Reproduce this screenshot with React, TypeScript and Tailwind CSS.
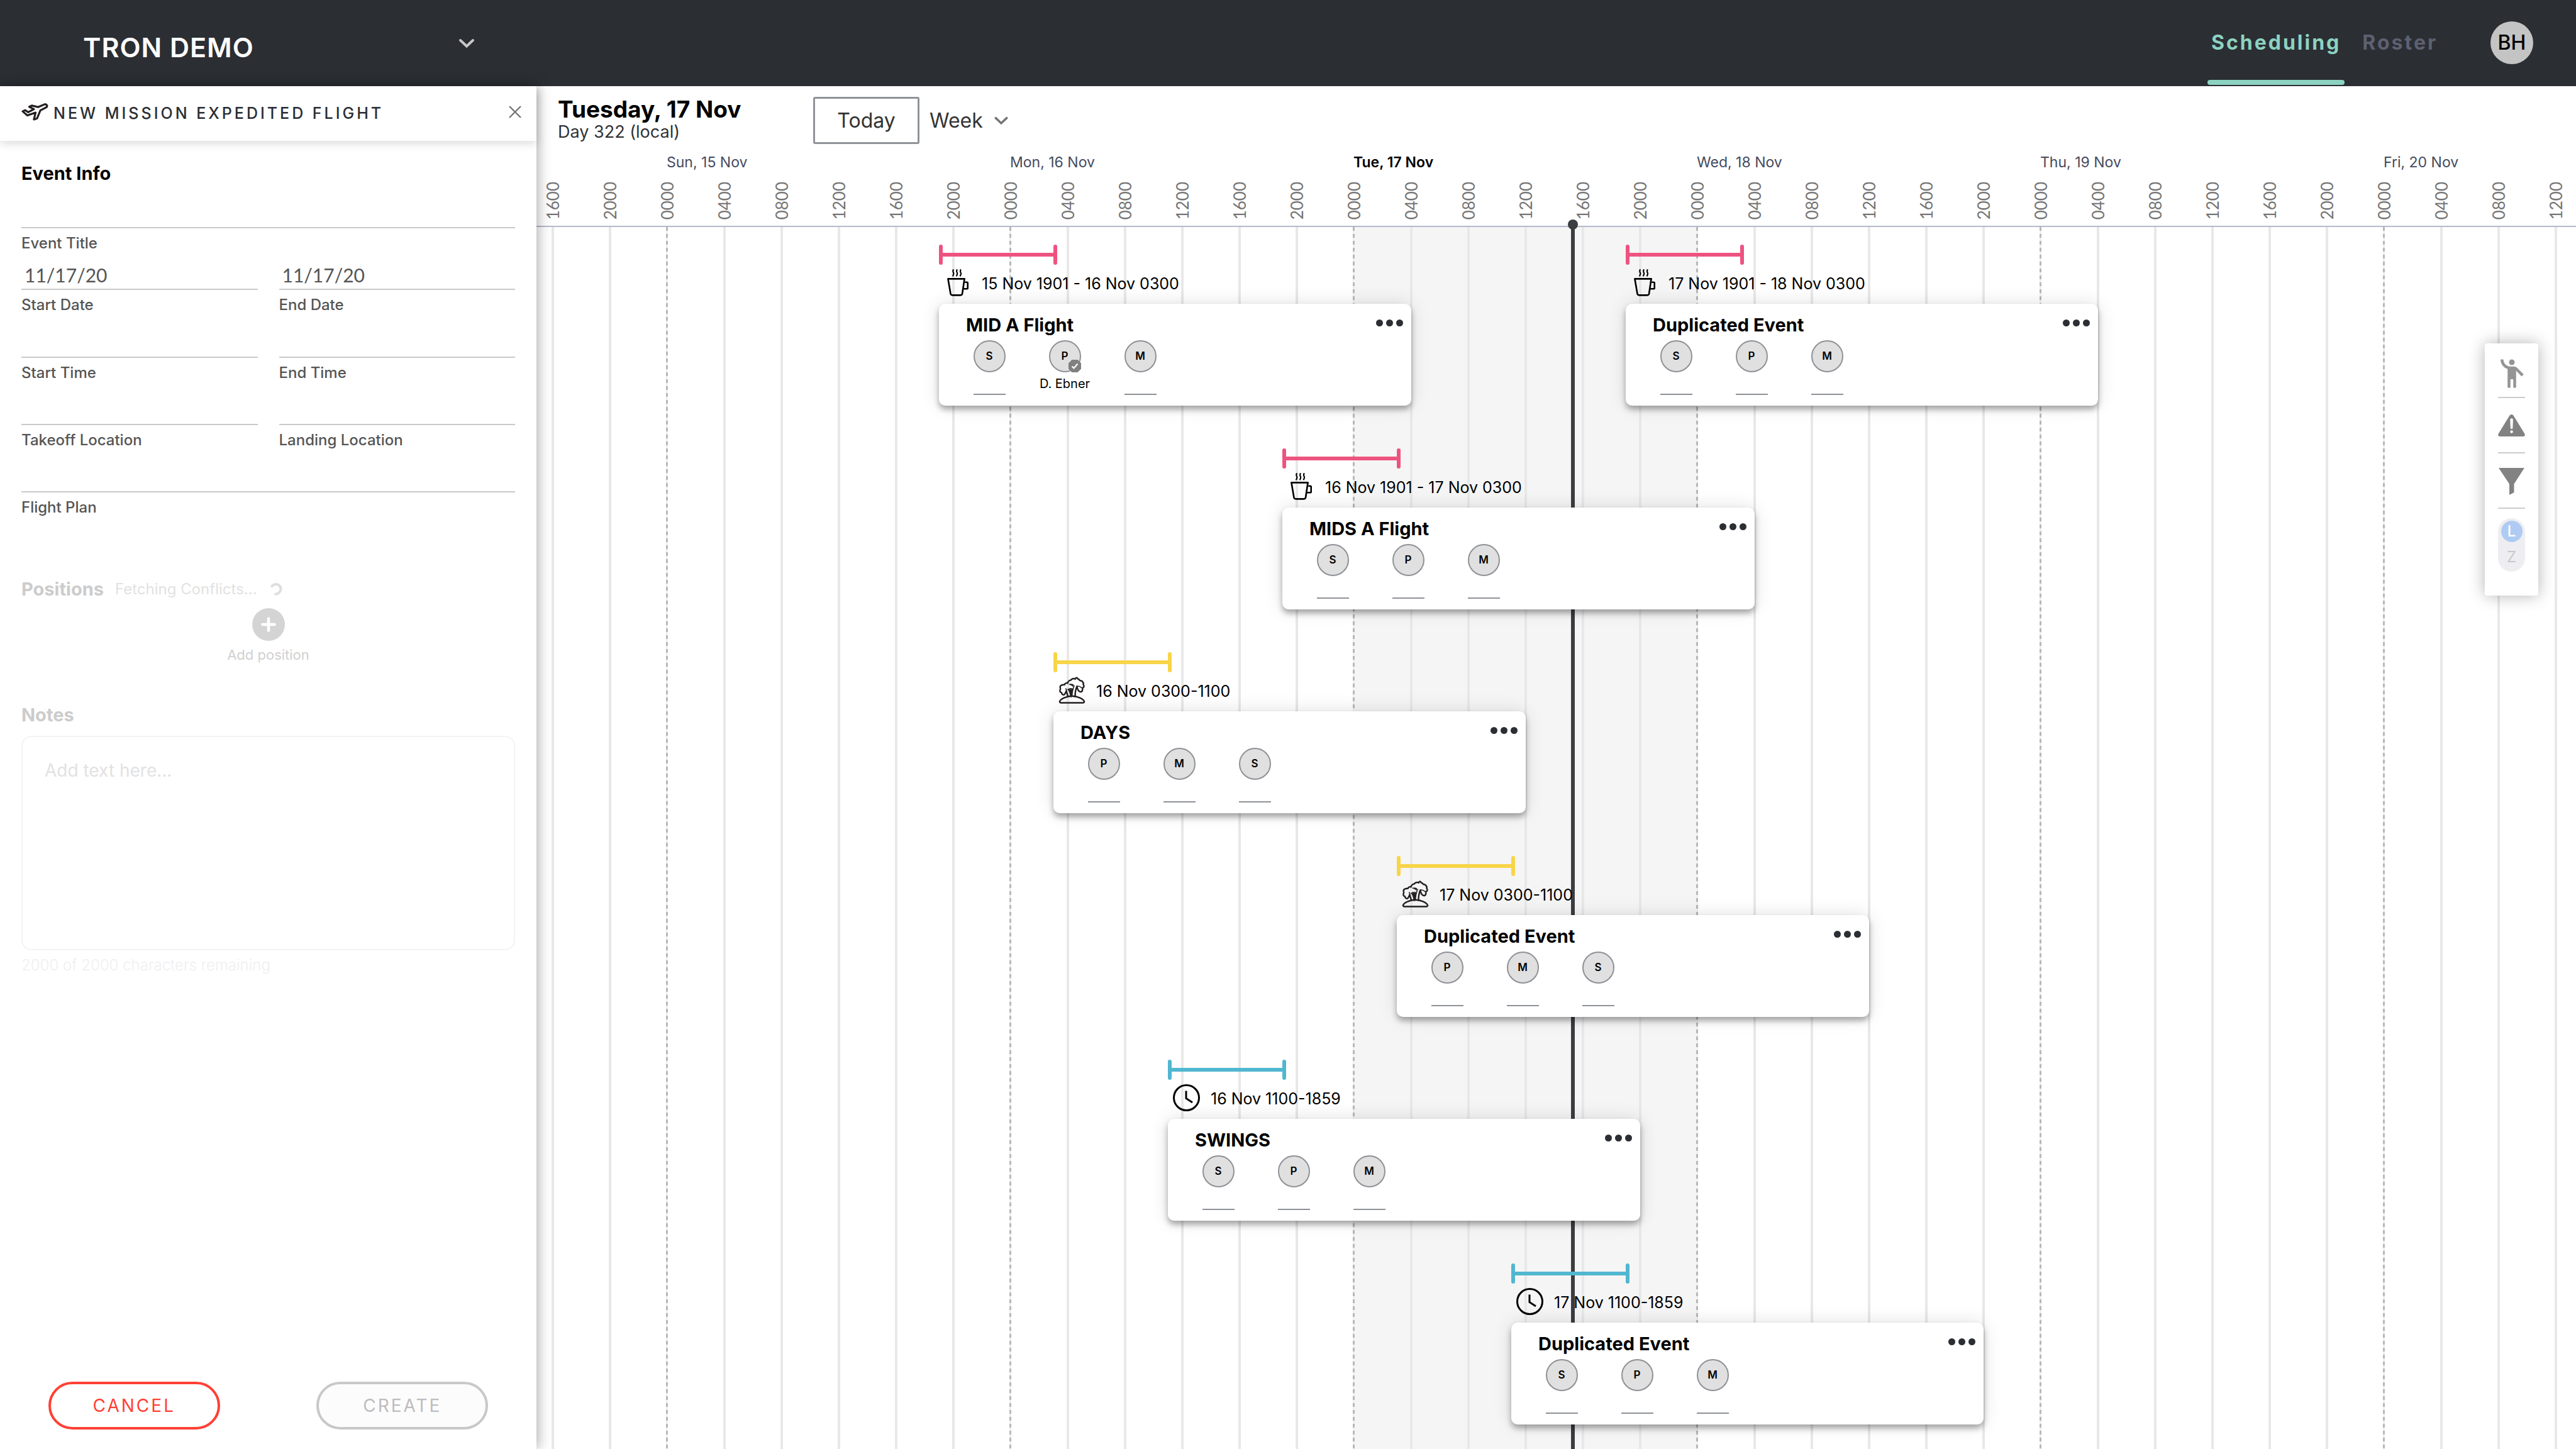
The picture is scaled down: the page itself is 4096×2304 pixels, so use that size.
import React from "react";

const HOUR_WIDTH = 22.75;
const HOURS = ["1600", "2000", "0000", "0400", "0800", "1200"];
const COLUMNS = Array.from({ length: 36 }, (_, i) => i);
const DAYS = ["Sun, 15 Nov", "Mon, 16 Nov", "Tue, 17 Nov", "Wed, 18 Nov", "Thu, 19 Nov", "Fri, 20 Nov"];
const TODAY = "Tue, 17 Nov";

type Shift = "mid" | "day" | "swing";
type Slot = { role: string; name?: string };
type FlightEvent = { title: string; time: string; shift: Shift; start: number; slots: Slot[] };

const slots = (roles: string): Slot[] => roles.split("").map((role) => ({ role }));

/* start: hours after Sunday 15 Nov 0000 */
const LANES: FlightEvent[][] = [
  [
    {
      title: "MID A Flight",
      time: "15 Nov 1901 - 16 Nov 0300",
      shift: "mid",
      start: 19,
      slots: [{ role: "S" }, { role: "P", name: "D. Ebner" }, { role: "M" }],
    },
    { title: "Duplicated Event", time: "17 Nov 1901 - 18 Nov 0300", shift: "mid", start: 67, slots: slots("SPM") },
  ],
  [{ title: "MIDS A Flight", time: "16 Nov 1901 - 17 Nov 0300", shift: "mid", start: 43, slots: slots("SPM") }],
  [{ title: "DAYS", time: "16 Nov 0300-1100", shift: "day", start: 27, slots: slots("PMS") }],
  [{ title: "Duplicated Event", time: "17 Nov 0300-1100", shift: "day", start: 51, slots: slots("PMS") }],
  [{ title: "SWINGS", time: "16 Nov 1100-1859", shift: "swing", start: 35, slots: slots("SPM") }],
  [{ title: "Duplicated Event", time: "17 Nov 1100-1859", shift: "swing", start: 59, slots: slots("SPM") }],
];

const SHIFT_COLOR: Record<Shift, string> = {
  mid: "bg-[#ee5380]",
  day: "bg-[#f8d548]",
  swing: "bg-[#50b7d0]",
};

function Chevron({ className }: { className: string }) {
  return (
    <svg viewBox="0 0 25 16" className={className} fill="none" stroke="currentColor" strokeWidth="4" strokeLinecap="round" aria-hidden="true">
      <path d="M2.5 3 12.5 12.5 22.5 3" />
    </svg>
  );
}

function PlaneIcon() {
  return (
    <svg viewBox="40 46 244 160" className="h-7 w-[43px]" fill="none" stroke="#231f20" strokeWidth="18" strokeLinejoin="round" aria-hidden="true">
      <path d="M51 121 74 110 101 128 153 101 111 79 134 68 191 82 247 58C264 52 280 66 268 83L211 113 182 184 153 194 168 132 94 158Z" />
    </svg>
  );
}

function MugIcon() {
  return (
    <svg viewBox="72 60 192 240" className="h-[43px] w-[34px]" fill="none" stroke="#000" strokeWidth="15" strokeLinejoin="round" aria-hidden="true">
      <path d="M80 145H228L208 279Q205 292 192 292H120Q106 292 103 279Z" />
      <path d="M232 176H249Q257 176 257 184V227Q257 235 249 235H220" />
      <path strokeWidth="12" d="M130 60C118 76 126 84 130 94C133 106 126 112 122 123M163 60C151 76 159 84 163 94C166 106 159 112 155 123M196 60C184 76 192 84 196 94C199 106 192 112 188 123" />
    </svg>
  );
}

function PalmIcon() {
  return (
    <svg viewBox="78 76 238 244" className="h-[43px] w-[43px]" fill="none" stroke="#231f20" strokeWidth="14" strokeLinejoin="round" strokeLinecap="round" aria-hidden="true">
      <path d="M86 300C92 276 150 251 197 251C245 251 302 276 308 300Q306 311 296 311H98Q88 311 86 300Z" />
      <path d="M225 256C225 225 230 190 242 163C246 190 258 213 279 213C294 207 294 190 292 176C306 174 309 160 300 148C302 124 287 112 268 110C260 96 250 96 246 92C242 82 230 82 227 97C212 90 194 94 189 106C172 108 160 122 158 134C146 130 132 138 130 148C106 146 86 158 91 176C97 182 91 190 89 198C86 212 94 220 104 220C104 236 120 246 131 234C138 224 142 214 146 206L161 256" />
      <path strokeWidth="5" fill="#231f20" d="M200 158 206 166 212 150C204 142 186 142 172 144Z" />
      <path strokeWidth="5" fill="#231f20" d="M181 256C180 225 172 207 161 194L200 190 220 154C208 186 200 220 199 256Z" />
      <path strokeWidth="9" d="M242 163C256 158 270 164 284 176M146 206C148 196 146 190 142 184M160 192C170 184 182 182 196 184" />
    </svg>
  );
}

function ClockIcon() {
  return (
    <svg viewBox="0 0 43 43" className="h-[43px] w-[43px]" fill="none" stroke="#000" strokeWidth="3" aria-hidden="true">
      <circle cx="21.5" cy="21.5" r="20" />
      <path d="M21 10.5V22.5L31 29" />
    </svg>
  );
}

function ShiftIcon({ shift }: { shift: Shift }) {
  if (shift === "mid") return <MugIcon />;
  if (shift === "day") return <PalmIcon />;
  return <ClockIcon />;
}

function Field({ id, label, value, className }: { id: string; label: string; value?: string; className: string }) {
  return (
    <div className="flex flex-col">
      <input
        id={id}
        type="text"
        defaultValue={value}
        className={`${className} w-full rounded-none border-b-2 border-[#c9c9c9] bg-transparent px-[5px] pt-3 font-['Lato',sans-serif] text-[30px] leading-8 text-[#555] outline-none`}
      />
      <label htmlFor={id} className="mt-2 text-[24px] leading-8 font-medium text-[#555]">
        {label}
      </label>
    </div>
  );
}

function TopBar() {
  return (
    <header className="flex h-[137px] shrink-0 items-stretch justify-between bg-[#2b2e33] pr-[68px] pl-[132px]">
      <div className="relative flex w-[623px] items-center pt-3">
        <select aria-label="Organization" className="w-full appearance-none bg-transparent text-[43px] leading-[52px] font-semibold tracking-[1px] text-white outline-none">
          <option>TRON DEMO</option>
        </select>
        <Chevron className="pointer-events-none absolute top-[61px] right-0 h-4 w-[26px] text-[#c8c8c8]" />
      </div>
      <div className="flex">
        <nav className="flex gap-4 text-[32px] leading-10 font-bold tracking-[3px]">
          <a href="#scheduling" className="flex flex-col items-center justify-between pt-[48px] pb-0.5 text-[#8cd3c1]">
            <span className="px-1.5">Scheduling</span>
            <span className="h-2 w-full rounded bg-[#8cd3c1]" />
          </a>
          <a href="#roster" className="px-3 pt-[48px] text-[#5d6070]">
            Roster
          </a>
        </nav>
        <button type="button" className="mt-[34px] ml-[72px] h-[68px] w-[68px] rounded-full bg-[#c4c4c4] text-[32px] font-medium text-black">
          BH
        </button>
      </div>
    </header>
  );
}

function MissionPanel() {
  return (
    <form className="relative z-20 flex w-[853px] shrink-0 flex-col bg-white shadow-[2px_0_20px_rgba(0,0,0,0.35)]">
      <div className="flex h-[87px] items-center pr-6 pb-1.5 pl-[34px] shadow-[0_4px_14px_rgba(0,0,0,0.15)]">
        <PlaneIcon />
        <h2 className="ml-2 pt-1 text-[25px] leading-8 font-medium tracking-[4px] text-[#2b2e33]">NEW MISSION EXPEDITED FLIGHT</h2>
        <button type="button" aria-label="Close" className="ml-auto text-[#757575]">
          <svg viewBox="0 0 20 20" className="h-5 w-5" fill="none" stroke="currentColor" strokeWidth="2.4" aria-hidden="true">
            <path d="M1 1 19 19M19 1 1 19" />
          </svg>
        </button>
      </div>

      <div className="flex flex-col px-[34px] pt-8">
        <h3 className="text-[29px] leading-10 font-bold text-black">Event Info</h3>
        <Field id="event-title" label="Event Title" className="h-[67px]" />
        <div className="grid grid-cols-2 gap-x-[34px]">
          <Field id="start-date" label="Start Date" value="11/17/20" className="h-[58px]" />
          <Field id="end-date" label="End Date" value="11/17/20" className="h-[58px]" />
          <Field id="start-time" label="Start Time" className="h-[68px]" />
          <Field id="end-time" label="End Time" className="h-[68px]" />
          <Field id="takeoff" label="Takeoff Location" className="h-[67px]" />
          <Field id="landing" label="Landing Location" className="h-[67px]" />
        </div>
        <Field id="flight-plan" label="Flight Plan" className="h-[67px]" />

        <div className="mt-[94px] flex items-center">
          <h3 className="text-[29px] leading-10 font-bold text-[#ccc]">Positions</h3>
          <p className="ml-[18px] text-[24px] leading-10 text-[#e2e2e2]">Fetching Conflicts...</p>
          <svg viewBox="0 0 20 20" className="ml-5 h-5 w-5" fill="none" stroke="#dedede" strokeWidth="4" aria-hidden="true">
            <path d="M2.5 6.5C5 1.5 11 1 14.500 3.500C19.500 7.500 18.500 17 7.500 18" />
          </svg>
        </div>
        <button type="button" className="mt-2.5 flex flex-col items-center self-center text-[22px] leading-7 text-[#d0d0d0]">
          <svg viewBox="0 0 52 52" className="h-[52px] w-[52px]" aria-hidden="true">
            <circle cx="26" cy="26" r="26" fill="#d4d4d4" />
            <path d="M26 16.500V35.500M16.500 26H35.500" stroke="#fff" strokeWidth="4.600" strokeLinecap="round" />
          </svg>
          <span className="mt-2">Add position</span>
        </button>

        <label htmlFor="notes" className="mt-[62px] text-[29px] leading-10 font-bold text-[#ccc]">
          Notes
        </label>
        <textarea
          id="notes"
          placeholder="Add text here..."
          className="mt-[13px] h-[341px] resize-none rounded-2xl border-2 border-[#f3f3f3] bg-transparent px-[35px] py-[33px] text-[28px] leading-10 outline-none placeholder:text-[#e2e2e2]"
        />
        <p className="mt-2 text-[24px] leading-8 font-light text-[#efefef]">2000 of 2000 characters remaining</p>
      </div>

      <div className="mt-auto mb-[31px] flex justify-around text-[28px] leading-9 tracking-[3px]">
        <button type="button" className="h-[76px] w-[273px] rounded-full border-4 border-[#ff4034] bg-white text-[#ff4034]">
          CANCEL
        </button>
        <button type="button" disabled className="h-[76px] w-[273px] rounded-full border-4 border-[#c8c8c8] bg-[#fcfcfc] text-[#bdbdbd]">
          CREATE
        </button>
      </div>
    </form>
  );
}

function TimelineHeader() {
  return (
    <div className="shrink-0 overflow-hidden border-b-2 border-[#b6b9ca]">
      <div className="flex h-[92px] items-start pt-[17px] pl-[34px]">
        <div className="w-[406px]">
          <h1 className="text-[37px] leading-10 font-bold text-black">Tuesday, 17 Nov</h1>
          <p className="text-[27px] leading-8 text-[#333]">Day 322 (local)</p>
        </div>
        <button type="button" className="h-[75px] w-[169px] rounded-[3px] border-[3px] border-[#8f9398] bg-white text-[32px] leading-10 text-[#333]">
          Today
        </button>
        <div className="ml-4 flex h-[75px] items-center">
          <select aria-label="Range" className="appearance-none bg-transparent text-[32px] leading-10 text-[#333] outline-none">
            <option>Week</option>
          </select>
          <Chevron className="pointer-events-none ml-[18px] h-3.5 w-[22px] text-[#757575]" />
        </div>
      </div>
      <div className="mt-[15px] flex pl-[207px] text-[23px] leading-7">
        {DAYS.map((day) => (
          <div key={day} className={day === TODAY ? "w-[546px] shrink-0 font-semibold text-black" : "w-[546px] shrink-0 text-[#454a5e]"}>
            {day}
          </div>
        ))}
      </div>
      <div className="-ml-5 flex h-[87px] pt-2 font-['Lato',sans-serif] text-[26px] leading-8 text-[#757575]">
        {COLUMNS.map((i) => (
          <div key={i} className="flex w-[91px] shrink-0 items-center justify-center">
            <span className="rotate-180 [writing-mode:vertical-rl]">{HOURS[i % 6]}</span>
          </div>
        ))}
      </div>
    </div>
  );
}

function GridLines() {
  return (
    <div className="absolute inset-0 flex overflow-hidden pl-6" aria-hidden="true">
      {COLUMNS.map((i) => (
        <div key={i} className={i >= 14 && i < 20 ? "w-[91px] shrink-0 bg-[#f5f5f5]" : "w-[91px] shrink-0"}>
          <div
            className={
              i % 6 === 2
                ? "h-full w-[3px] bg-[repeating-linear-gradient(to_bottom,#b8b8b8_0px,#b8b8b8_6px,#f0f0f0_6px,#f0f0f0_11px)]"
                : "h-full w-1 bg-[#e8e8e8]"
            }
          />
        </div>
      ))}
    </div>
  );
}

function Position({ slot }: { slot: Slot }) {
  return (
    <div className="flex w-[120px] flex-col items-center">
      <div className="relative flex h-[51px] w-[51px] items-center justify-center rounded-full border-2 border-[#8e9196] bg-[#e0e0e0] text-[17px] font-semibold text-black">
        {slot.role}
        {slot.name && (
          <svg viewBox="0 0 20 20" className="absolute -right-0.5 -bottom-0.5 h-5 w-5" aria-hidden="true">
            <path d="M6 0H14L20 6V14L14 20H6L0 14V6Z" fill="#808080" stroke="#808080" strokeLinejoin="round" />
            <path d="M5.500 10.500 8.500 13.500 14.500 6.500" fill="none" stroke="#fff" strokeWidth="2.200" />
          </svg>
        )}
      </div>
      {slot.name ? (
        <span className="mt-1 text-[20px] leading-7 text-black">{slot.name}</span>
      ) : (
        <span className="mt-1 h-8 w-[51px] border-b-2 border-[#8e9196]" />
      )}
    </div>
  );
}

function EventItem({ event }: { event: FlightEvent }) {
  const color = SHIFT_COLOR[event.shift];
  return (
    <article className="col-start-1 row-start-1 w-[751px]" style={{ marginLeft: Math.floor(event.start * HOUR_WIDTH) }}>
      <div className="flex h-8 w-[188px] items-center">
        <div className={`h-full w-1.5 rounded-[3px] ${color}`} />
        <div className={`h-1.5 flex-1 ${color}`} />
        <div className={`h-full w-1.5 rounded-[3px] ${color}`} />
      </div>
      <div className="mt-[7px] flex h-[43px] items-center pl-2">
        <div className="flex w-[43px] justify-center">
          <ShiftIcon shift={event.shift} />
        </div>
        <span className="ml-[17px] pt-0.5 text-[25px] leading-8 text-black">{event.time}</span>
      </div>
      <div className="mt-3 h-[162px] rounded-[10px] bg-white pt-4 shadow-[0_6px_10px_rgba(0,0,0,0.32),0_0_30px_rgba(0,0,0,0.12)]">
        <div className="flex items-start justify-between pr-[13px] pl-[43px]">
          <h2 className="text-[29px] leading-9 font-bold text-black">{event.title}</h2>
          <button type="button" aria-label={`${event.title} options`} className="mt-[9px] flex gap-[5px]">
            <span className="h-[11px] w-[11px] rounded-full bg-[#2b2e33]" />
            <span className="h-[11px] w-[11px] rounded-full bg-[#2b2e33]" />
            <span className="h-[11px] w-[11px] rounded-full bg-[#2b2e33]" />
          </button>
        </div>
        <div className="mt-1.5 flex pl-5">
          {event.slots.map((slot) => (
            <Position key={slot.role} slot={slot} />
          ))}
        </div>
      </div>
    </article>
  );
}

function ToolDock() {
  return (
    <aside className="absolute top-[185px] right-[60px] z-10 flex h-[401px] w-[85px] flex-col items-center rounded bg-white shadow-[0_0_26px_rgba(0,0,0,0.3)]">
      <button type="button" aria-label="People" className="flex h-[87px] w-[43px] items-center justify-center border-b-2 border-[#ccc] pt-2.5">
        <svg viewBox="0 0 24 24" className="h-[54px] w-[54px] shrink-0" fill="#949494" aria-hidden="true">
          <circle cx="12" cy="4" r="2" />
          <path d="M15.890 8.110C15.500 7.720 14.830 7 13.530 7h-2.540C8.240 6.990 6 4.750 6 2H4c0 3.160 2.110 5.840 5 6.710V22h2v-6h2v6h2V10.050L18.950 14l1.410-1.410-4.470-4.480z" />
        </svg>
      </button>
      <button type="button" aria-label="Conflicts" className="flex h-[88px] w-[43px] items-center justify-center border-b-2 border-[#ccc]">
        <svg viewBox="0 0 43 35" className="h-[35px] w-[43px]" aria-hidden="true">
          <path fill="#828282" d="M17.800 2.800C19.500-.8 23.500-.8 25.200 2.800L42.400 30.800C43.500 33 42.500 35 40 35H3C.5 35-.5 33 .6 30.800Z" />
          <path fill="#fff" d="M19.300 8.500C19.300 5.500 23.900 5.500 23.900 8.500L23.400 21.500C23.200 23.500 20 23.500 19.800 21.500Z" />
          <circle cx="21.600" cy="27.500" r="2.200" fill="#fff" />
        </svg>
      </button>
      <button type="button" aria-label="Filter" className="flex h-[88px] w-[43px] items-center justify-center border-b-2 border-[#ccc] pt-0.5">
        <svg viewBox="0 0 41 43" className="h-[43px] w-[41px]" aria-hidden="true">
          <path fill="#828282" d="M0 0H41L24.500 25.500V39L17 43V25.500Z" />
        </svg>
      </button>
      <div role="radiogroup" aria-label="Time zone" className="mt-[15px] flex w-[43px] flex-col items-center gap-1.5 rounded-[22px] bg-[#eeeef2] pt-1 pb-[5px] text-[24px] leading-9">
        <label className="relative flex h-[34px] w-[34px] items-center justify-center rounded-full bg-[#b0cbf3] font-medium text-white">
          <input type="radio" name="zone" defaultChecked className="absolute inset-0 appearance-none" />L
        </label>
        <label className="relative flex h-9 w-[34px] items-center justify-center text-[#c8c8c8]">
          <input type="radio" name="zone" className="absolute inset-0 appearance-none" />Z
        </label>
      </div>
    </aside>
  );
}

function Timeline() {
  return (
    <main className="flex min-w-0 flex-1 flex-col overflow-hidden">
      <TimelineHeader />
      <section className="relative flex-1">
        <GridLines />
        <div className="absolute top-0 bottom-0 left-[1645px] w-1.5 bg-[#3b3d42]">
          <div className="absolute -top-3 -left-[5px] h-4 w-4 rounded-full bg-[#3b3d42]" />
        </div>
        <div className="relative flex flex-col gap-[68px] pt-7 pl-[208px]">
          {LANES.map((lane, i) => (
            <div key={i} className="grid grid-cols-1">
              {lane.map((event) => (
                <EventItem key={event.start} event={event} />
              ))}
            </div>
          ))}
        </div>
        <ToolDock />
      </section>
    </main>
  );
}

export default function App() {
  return (
    <div className="flex min-h-screen flex-col bg-white font-['Inter',sans-serif]">
      <TopBar />
      <div className="flex flex-1">
        <MissionPanel />
        <Timeline />
      </div>
    </div>
  );
}
